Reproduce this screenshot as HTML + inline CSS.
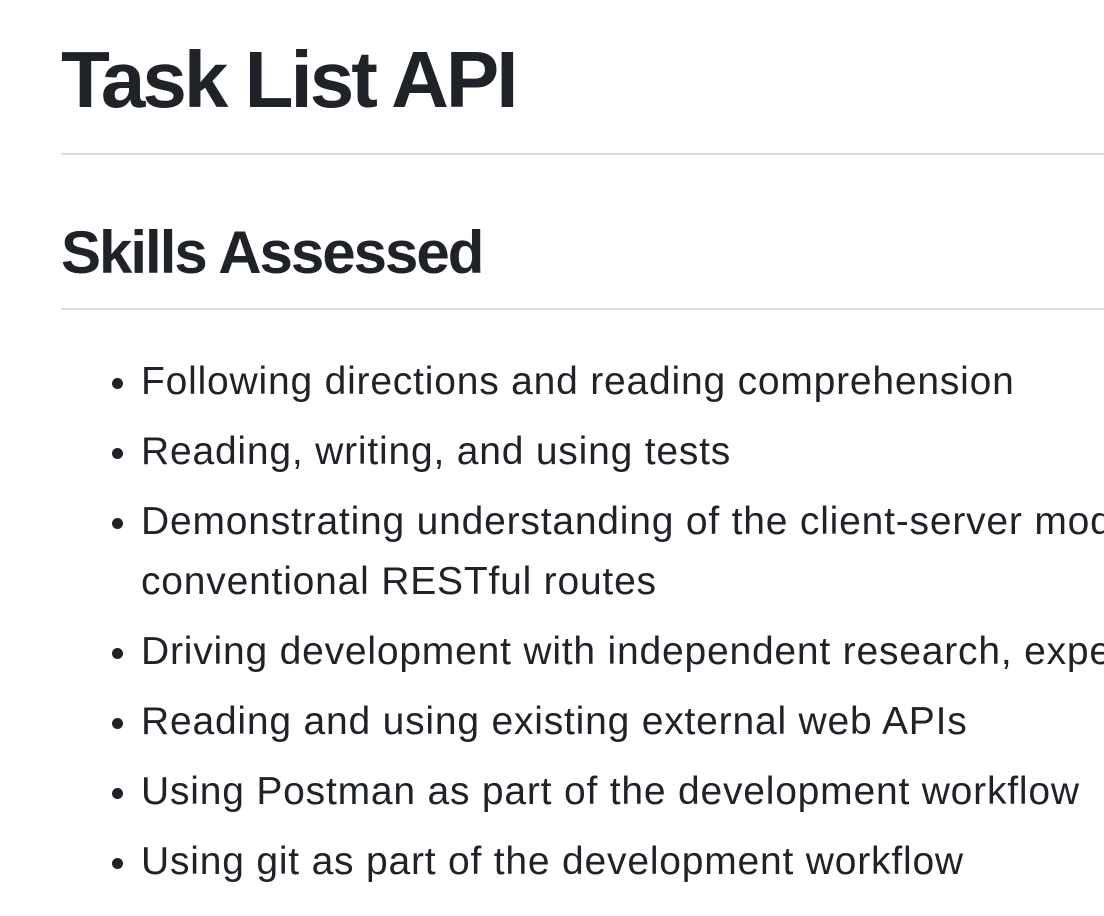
<!DOCTYPE html>
<html><head><meta charset="utf-8"><style>
html,body{margin:0;padding:0;background:#fff;overflow:hidden;width:1104px;height:916px}
body{font-family:"Liberation Sans",Helvetica,Arial,sans-serif;color:#1f2328;}
.c{position:absolute;left:61px;top:0;width:1043px;height:916px;overflow:hidden}
h1{font-size:80px;line-height:100px;font-weight:600;margin:30px 0 40px;padding-bottom:23px;border-bottom:2px solid #d8dee4;letter-spacing:-3px}
h2{font-size:60px;line-height:75px;font-weight:600;margin:60px 0 40px;padding-bottom:18px;border-bottom:2px solid #d8dee4;letter-spacing:-2px}
ul{margin:0;padding-left:80px;font-size:39px;line-height:60px;white-space:nowrap;letter-spacing:0.8px}
li{margin-top:10px;position:relative;top:2px}
li:first-child{margin-top:0}
</style></head><body><div class="c">
<h1>Task List API</h1>
<h2>Skills Assessed</h2>
<ul>
<li>Following directions and reading comprehension</li>
<li>Reading, writing, and using tests</li>
<li>Demonstrating understanding of the client-server model, request-response cycle and<br>conventional RESTful routes</li>
<li>Driving development with independent research, experimentation, and collaboration</li>
<li>Reading and using existing external web APIs</li>
<li>Using Postman as part of the development workflow</li>
<li>Using git as part of the development workflow</li>
</ul>
</div></body></html>
